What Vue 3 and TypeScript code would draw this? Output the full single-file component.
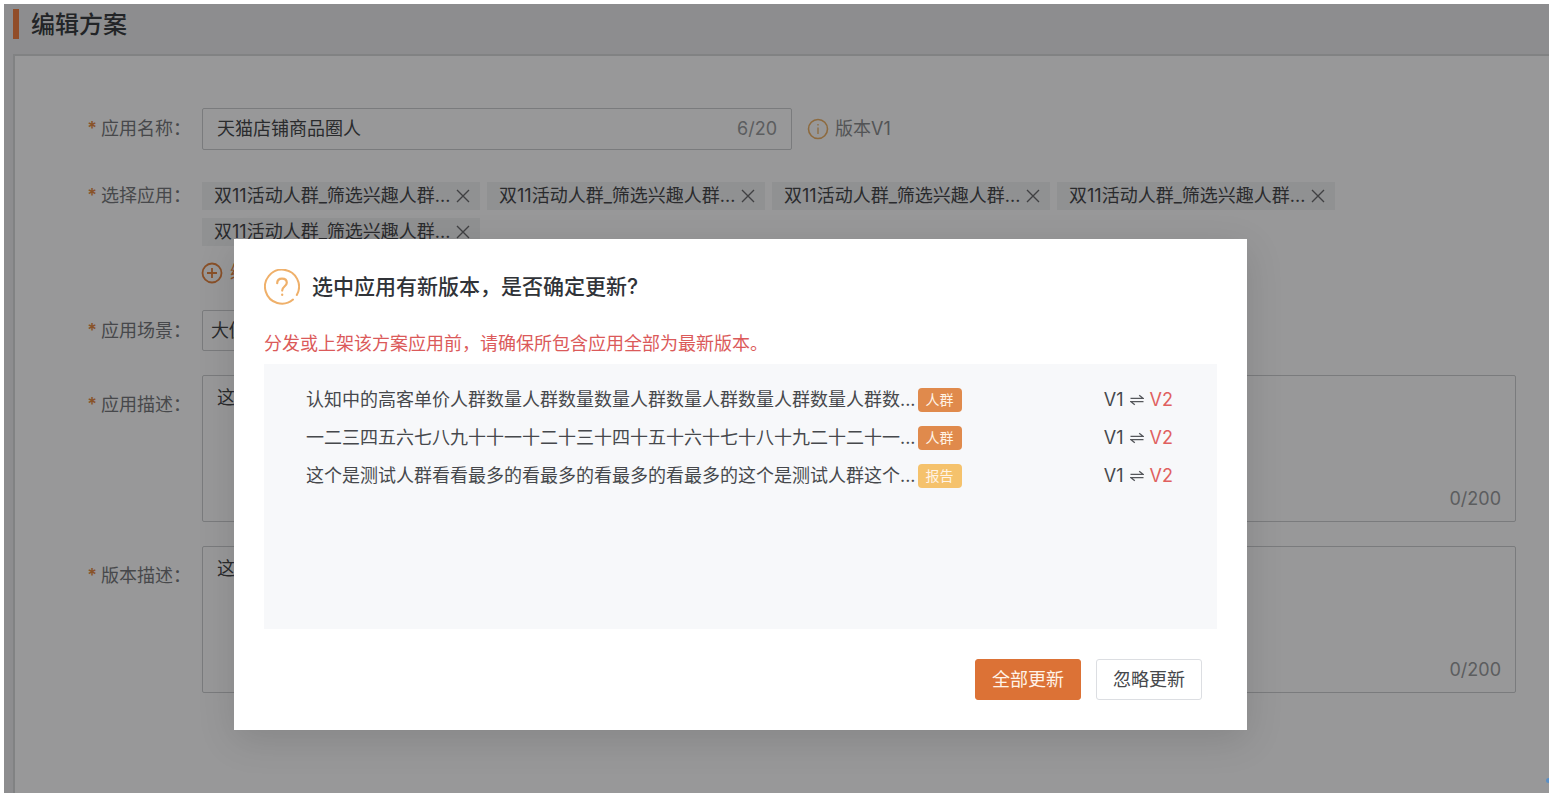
<script setup lang="ts">
import { ref } from 'vue'

interface UpdateItem {
  name: string
  kind: string
  tone: 'crowd' | 'report'
  from: string
  to: string
}

const name = ref('天猫店铺商品圈人')
const scene = ref('大促')
const description = ref('这个是测试')
const versionNote = ref('这个是测试')

const apps = ref<string[]>(Array.from({ length: 5 }, () => '双11活动人群_筛选兴趣人群...'))

const updates: UpdateItem[] = [
  { name: '认知中的高客单价人群数量人群数量数量人群数量人群数量人群数量人群数...', kind: '人群', tone: 'crowd', from: 'V1', to: 'V2' },
  { name: '一二三四五六七八九十十一十二十三十四十五十六十七十八十九二十二十一...', kind: '人群', tone: 'crowd', from: 'V1', to: 'V2' },
  { name: '这个是测试人群看看最多的看最多的看最多的看最多的这个是测试人群这个...', kind: '报告', tone: 'report', from: 'V1', to: 'V2' },
]

function removeApp(index: number) {
  apps.value.splice(index, 1)
}
</script>

<template>
  <div class="frame">
    <div class="shell">
      <header class="page-head">
        <span class="bar"></span>
        <h1>编辑方案</h1>
      </header>

      <form class="panel" @submit.prevent>
        <div class="row">
          <label class="label" for="app-name"><i>*</i>应用名称：</label>
          <div class="control inline">
            <div class="text-box">
              <input id="app-name" v-model="name" type="text" />
              <span class="count">6/20</span>
            </div>
            <span class="version">
              <svg width="22" height="22" viewBox="0 0 22 22" fill="none" stroke="#ecb169">
                <circle cx="11" cy="11" r="9.5" stroke-width="1.6" />
                <path d="M11 9.5V16M11 6V7.5" stroke-width="1.3" />
              </svg>
              版本V1
            </span>
          </div>
        </div>

        <div class="row apps">
          <span class="label"><i>*</i>选择应用：</span>
          <div class="control">
            <ul class="tags">
              <li v-for="(app, i) in apps" :key="i">
                <span>{{ app }}</span>
                <button type="button" aria-label="移除" @click="removeApp(i)">
                  <svg width="14" height="14" viewBox="0 0 14 14" fill="none" stroke="#6c6d70" stroke-width="1.4">
                    <path d="M1 1L13 13M13 1L1 13" />
                  </svg>
                </button>
              </li>
            </ul>
            <button type="button" class="edit-apps">
              <svg width="22" height="22" viewBox="0 0 22 22" fill="none" stroke="#e48543" stroke-width="1.8">
                <circle cx="11" cy="11" r="9.5" />
                <path d="M11 6V16M6 11H16" />
              </svg>
              编辑应用
            </button>
          </div>
        </div>

        <div class="row">
          <label class="label" for="scene"><i>*</i>应用场景：</label>
          <div class="control">
            <select id="scene" v-model="scene">
              <option>大促</option>
              <option>日常</option>
            </select>
          </div>
        </div>

        <div class="row area">
          <label class="label" for="desc"><i>*</i>应用描述：</label>
          <div class="control area-box">
            <textarea id="desc" v-model="description"></textarea>
            <span class="count">0/200</span>
          </div>
        </div>

        <div class="row area">
          <label class="label" for="note"><i>*</i>版本描述：</label>
          <div class="control area-box">
            <textarea id="note" v-model="versionNote"></textarea>
            <span class="count">0/200</span>
          </div>
        </div>
      </form>

      <div class="overlay">
        <section class="dialog" role="dialog" aria-modal="true" aria-labelledby="dialog-title">
          <div class="dialog-head">
            <svg width="36" height="36" viewBox="0 0 36 36" fill="none" stroke="#efb06a" stroke-width="2" stroke-linecap="round">
              <path d="M29 30.6A17 17 0 1 1 32.8 26" />
              <path stroke-width="2.2" d="M13.2 14.2C13.2 11 15.3 9.6 18 9.6C20.8 9.6 22.8 11.2 22.8 13.8C22.8 17.2 18.2 17.4 18.2 21.6" />
              <path stroke-width="2.2" d="M18.2 25.6V26" />
            </svg>
            <h2 id="dialog-title">选中应用有新版本，是否确定更新?</h2>
          </div>
          <p class="warning">分发或上架该方案应用前，请确保所包含应用全部为最新版本。</p>
          <ul class="updates">
            <li v-for="item in updates" :key="item.name">
              <span class="item-name">{{ item.name }}</span>
              <span class="kind" :class="item.tone">{{ item.kind }}</span>
              <span class="change">
                {{ item.from }}
                <svg width="14" height="12" viewBox="0 0 14 12" fill="none" stroke="#55575b" stroke-width="1.3">
                  <path d="M0.5 4.3H13L9.2 1.2M13.5 7.7H1L4.8 10.8" />
                </svg>
                <b>{{ item.to }}</b>
              </span>
            </li>
          </ul>
          <div class="actions">
            <button type="button" class="primary">全部更新</button>
            <button type="button">忽略更新</button>
          </div>
        </section>
      </div>
      <span class="beacon"></span>
    </div>
  </div>
</template>

<style>
body {
  margin: 0;
  background: #fff;
}
</style>

<style scoped>
.frame {
  box-sizing: border-box;
  min-height: 100vh;
  padding: 4px 1px 3px 4px;
  display: flex;
  font: 18px/26px Inter, "Noto Sans CJK SC", sans-serif;
  color: #46484c;
}
.frame * {
  box-sizing: border-box;
}
.shell {
  position: relative;
  flex: 1;
  min-width: 0;
  display: flex;
  flex-direction: column;
  overflow: hidden;
  background: #ebecee;
}
h1,
h2,
p,
ul {
  margin: 0;
  padding: 0;
}
ul {
  list-style: none;
}
button,
input,
select,
textarea {
  font: inherit;
  color: inherit;
}
button {
  cursor: pointer;
}
.page-head {
  display: flex;
  gap: 12px;
  height: 50px;
  padding: 5px 9px;
}
.bar {
  width: 6px;
  height: 30px;
  background: #f28045;
}
h1 {
  font-size: 24px;
  line-height: 32px;
  font-weight: 500;
  color: #3a3c42;
}
.panel {
  flex: 1;
  display: flex;
  flex-direction: column;
  gap: 24px;
  margin-left: 9px;
  padding: 52px 33px 60px 0;
  border: solid #d8d9db;
  border-width: 2px 0 0 2px;
  background: #fdfeff;
}
.row {
  display: flex;
  gap: 11px;
}
.label {
  flex: none;
  width: 176px;
  padding-top: 8px;
  text-align: right;
  white-space: nowrap;
  color: #77797d;
}
.label i {
  margin-right: 4px;
  font-style: normal;
  font-weight: 600;
  color: #e58a45;
}
.control {
  flex: 1;
  min-width: 0;
}
.inline {
  display: flex;
  align-items: center;
  gap: 15px;
}
.text-box {
  display: flex;
  align-items: center;
  flex: 0 1 590px;
  height: 42px;
  padding: 0 14px;
  border: 1px solid #cccdd0;
  border-radius: 2px;
}
.text-box input {
  flex: 1;
  min-width: 0;
  padding: 0;
  border: 0;
  outline: 0;
  background: none;
}
.count {
  color: #999b9e;
}
.version {
  display: flex;
  align-items: center;
  gap: 6px;
  color: #8b8d90;
}
.apps {
  padding-top: 8px;
}
.apps .label {
  padding-top: 1px;
}
.tags {
  display: flex;
  flex-wrap: wrap;
  gap: 8px 7px;
}
.tags li {
  display: flex;
  align-items: center;
  justify-content: space-between;
  width: 278px;
  height: 28px;
  padding: 0 10px 0 12px;
  background: #f1f2f4;
  line-height: 28px;
  white-space: nowrap;
}
.tags button {
  display: flex;
  padding: 0;
  border: 0;
  background: none;
}
.edit-apps {
  display: flex;
  align-items: center;
  gap: 7px;
  margin-top: 14px;
  margin-left: -1px;
  padding: 0;
  border: 0;
  background: none;
  color: #e48543;
}
select {
  display: block;
  width: 590px;
  max-width: 100%;
  height: 41px;
  padding: 0 8px;
  border: 1px solid #cccdd0;
  border-radius: 2px;
  appearance: none;
  background: none;
}
.area .label {
  padding-top: 17px;
}
.area-box {
  display: flex;
  flex-direction: column;
  align-items: flex-end;
  height: 147px;
  padding: 9px 14px;
  border: 1px solid #cccdd0;
  border-radius: 2px;
}
textarea {
  flex: 1;
  width: 100%;
  padding: 0;
  border: 0;
  outline: 0;
  resize: none;
  background: none;
}
.overlay {
  position: absolute;
  inset: 0;
  display: flex;
  justify-content: center;
  align-items: flex-start;
  padding: 235px 72px 0 0;
  background: rgba(0, 0, 0, 0.4);
}
.dialog {
  flex: 0 1 1013px;
  min-width: 0;
  padding: 30px;
  background: #fff;
  box-shadow: 0 10px 36px rgba(0, 0, 0, 0.12);
}
.dialog-head {
  display: flex;
  align-items: center;
  gap: 12px;
}
h2 {
  font-size: 21px;
  line-height: 30px;
  font-weight: 500;
  color: #303338;
}
.warning {
  margin-top: 26px;
  color: #db5a5a;
}
.updates {
  min-height: 265px;
  margin-top: 7px;
  padding: 17px 44px 17px 42px;
  background: #f7f8fa;
}
.updates li {
  display: flex;
  align-items: center;
  height: 38px;
  white-space: nowrap;
}
.item-name {
  overflow: hidden;
}
.kind {
  flex: none;
  width: 44px;
  margin-left: 2px;
  border-radius: 4px;
  font-size: 14px;
  line-height: 24px;
  text-align: center;
  color: #fff3e6;
}
.crowd {
  background: #e08a4c;
}
.report {
  background: #f5c26c;
}
.change {
  display: flex;
  align-items: center;
  gap: 6px;
  margin-left: auto;
}
.change b {
  font-weight: 400;
  color: #e0605f;
}
.actions {
  display: flex;
  justify-content: flex-end;
  gap: 15px;
  margin-top: 30px;
  padding-right: 15px;
}
.actions button {
  width: 106px;
  height: 41px;
  padding: 0;
  border: 1px solid #dcdee2;
  border-radius: 3px;
  background: #fff;
}
.actions .primary {
  border-color: #dc7236;
  background: #dc7236;
  color: #fff3e8;
}
.beacon {
  position: absolute;
  right: -2px;
  bottom: 10px;
  width: 5px;
  height: 5px;
  border-radius: 50%;
  background: #5b8fc4;
}
</style>
